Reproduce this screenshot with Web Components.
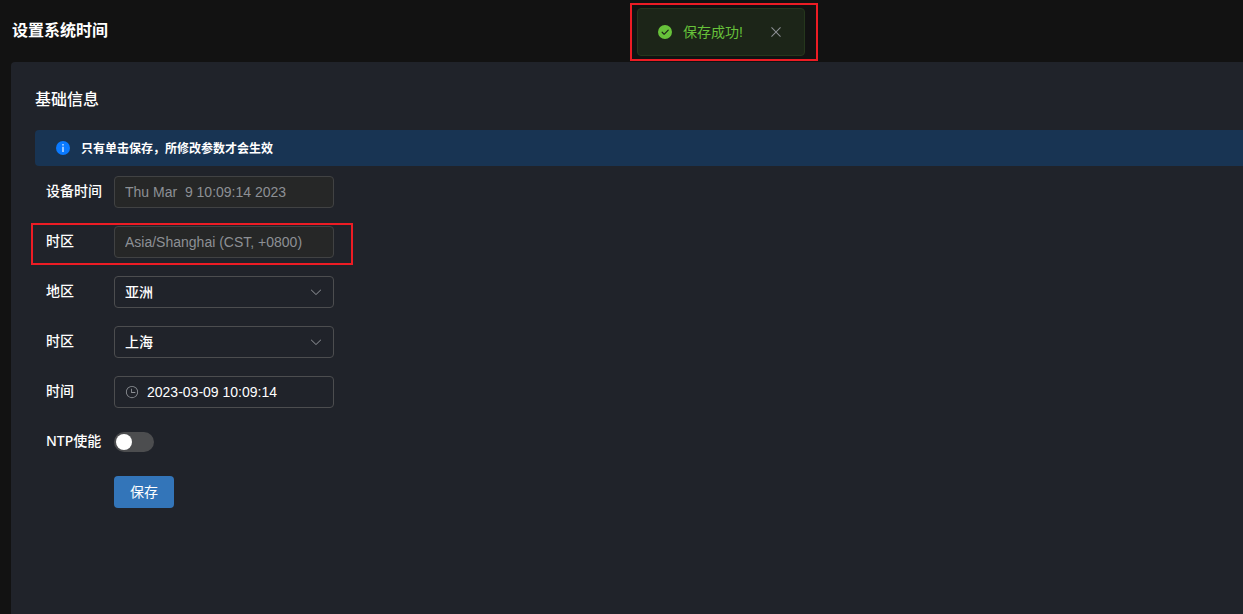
<!DOCTYPE html>
<html lang="zh-CN">
<head>
<meta charset="utf-8">
<meta name="viewport" content="width=device-width, initial-scale=1">
<title>设置系统时间</title>
<style>
  body {
    margin: 0;
    background: #121212;
    color: #fff;
    font: 14px/20px "Liberation Sans", "Noto Sans CJK SC", sans-serif;
  }
</style>
</head>
<body>
<time-settings-page heading="设置系统时间">
  <toast-message slot="toast">保存成功!</toast-message>
  <settings-card heading="基础信息">
    <info-banner>只有单击保存，所修改参数才会生效</info-banner>
    <settings-form>
      <text-field label="设备时间" value="Thu Mar  9 10:09:14 2023" disabled></text-field>
      <text-field label="时区" value="Asia/Shanghai (CST, +0800)" disabled marked></text-field>
      <select-field label="地区" options="亚洲,欧洲,非洲"></select-field>
      <select-field label="时区" options="上海,香港,东京"></select-field>
      <text-field label="时间" value="2023-03-09 10:09:14" clock></text-field>
      <switch-field label="NTP使能"></switch-field>
      <save-button>保存</save-button>
    </settings-form>
  </settings-card>
</time-settings-page>

<script>
const rowStyle = `
  :host { display: grid; grid-template-columns: 68px 220px; align-items: center; height: 32px; width: max-content; position: relative; }
  label { padding-bottom: 2px; font-weight: 500; font-family: "Noto Sans", "Noto Sans CJK SC", sans-serif; white-space: nowrap; }
  .box { display: flex; align-items: center; position: relative; box-sizing: border-box; height: 32px; border: 1px solid #4c4d4f; border-radius: 4px; }
  input, select { font: inherit; color: #fff; background: none; border: 0; outline: 0; margin: 0; padding: 0 10px; width: 100%; height: 30px; min-width: 0; box-sizing: border-box; }
`;

class Base extends HTMLElement {
  connectedCallback() {
    if (this.shadowRoot) return;
    this.attachShadow({ mode: 'open' }).innerHTML = this.render();
  }
  attr(name) { return this.getAttribute(name) || ''; }
}

customElements.define('time-settings-page', class extends Base {
  render() {
    return `<style>
      :host { display: flex; flex-direction: column; min-height: 100vh; position: relative; }
      header { display: flex; align-items: center; height: 62px; padding-left: 12px; box-sizing: border-box; }
      h1 { margin: 0; font-size: 16px; line-height: 24px; font-weight: 700; }
      main { flex: 1; display: flex; padding-left: 11px; }
      ::slotted(settings-card) { flex: 1; }
      ::slotted(toast-message) { position: absolute; top: 3px; left: 630px; }
    </style>
    <header><h1>${this.attr('heading')}</h1></header>
    <main><slot></slot></main>
    <slot name="toast"></slot>`;
  }
});

customElements.define('toast-message', class extends Base {
  render() {
    return `<style>
      :host { display: block; box-sizing: border-box; width: 188px; height: 58px; border: 2px solid #ed1c24; padding: 3px 11px 3px 5px; }
      .toast { display: flex; align-items: center; box-sizing: border-box; height: 48px; width: 168px; padding: 0 20px 0 19px; border: 1px solid #25371c; border-radius: 4px; background: #1c2518; color: #67c23a; }
      .text { margin-left: 10px; flex: 1; white-space: nowrap; }
      button { display: flex; padding: 0; border: 0; background: none; color: #8d9095; }
      svg { display: block; }
    </style>
    <div class="toast" role="status">
      <svg width="16" height="16" viewBox="0 0 1024 1024"><path fill="#67c23a" d="M512 64a448 448 0 1 1 0 896 448 448 0 0 1 0-896zm-55.808 536.384-99.52-99.584a38.4 38.4 0 1 0-54.336 54.336l126.72 126.72a38.272 38.272 0 0 0 54.336 0l262.4-262.464a38.4 38.4 0 1 0-54.272-54.336L456.192 600.384z"/></svg>
      <span class="text"><slot></slot></span>
      <button type="button" aria-label="关闭"><svg width="16" height="16" viewBox="0 0 1024 1024"><path fill="currentColor" d="M764.288 214.592 512 466.88 259.712 214.592a31.936 31.936 0 0 0-45.12 45.12L466.752 512 214.528 764.224a31.936 31.936 0 1 0 45.12 45.184L512 557.184l252.288 252.288a31.936 31.936 0 0 0 45.12-45.12L557.12 512.064l252.288-252.352a31.936 31.936 0 1 0-45.12-45.184z"/></svg></button>
    </div>`;
  }
});

customElements.define('settings-card', class extends Base {
  render() {
    return `<style>
      :host { display: block; background: #20232a; border-top-left-radius: 4px; padding: 24px 0 24px 24px; min-width: 0; }
      h2 { margin: 0 0 18px; padding-top: 2px; font-size: 16px; line-height: 24px; font-weight: 500; }
    </style>
    <h2>${this.attr('heading')}</h2><slot></slot>`;
  }
});

customElements.define('info-banner', class extends Base {
  render() {
    return `<style>
      :host { display: flex; align-items: center; gap: 10px; height: 36px; padding-left: 20px; background: #183453; border-radius: 4px 0 0 4px; font-size: 12px; font-weight: 700; }
      span { padding-top: 2px; }
    </style>
    <svg width="16" height="16" viewBox="0 0 16 16"><circle cx="8" cy="8" r="7" fill="#0a7aff"/><path fill="#cfe4ff" d="M7.3 4h1.4v1.5H7.3zM7.3 6.7h1.4V12H7.3z"/></svg>
    <span><slot></slot></span>`;
  }
});

customElements.define('settings-form', class extends Base {
  render() {
    return `<style>
      :host { display: block; }
      form { display: flex; flex-direction: column; gap: 18px; padding: 10px 0 0 11px; }
    </style>
    <form><slot></slot></form>`;
  }
});

customElements.define('text-field', class extends Base {
  render() {
    const clock = this.hasAttribute('clock')
      ? `<svg width="14" height="14" viewBox="0 0 1024 1024" fill="#8d9095"><path d="M512 896a384 384 0 1 0 0-768 384 384 0 0 0 0 768zm0 64a448 448 0 1 1 0-896 448 448 0 0 1 0 896z"/><path d="M480 256a32 32 0 0 1 32 32v256a32 32 0 0 1-64 0V288a32 32 0 0 1 32-32z"/><path d="M480 512h256q32 0 32 32t-32 32H480q-32 0-32-32t32-32z"/></svg>` : '';
    return `<style>${rowStyle}
      input:disabled { color: #8d9095; -webkit-text-fill-color: #8d9095; }
      :host([disabled]) .box { background: #262727; border-color: #414243; }
      :host([clock]) .box { padding-left: 10px; }
      :host([clock]) input { padding-left: 8px; }
      svg { flex: none; }
      :host([marked])::after { content: ""; position: absolute; inset: -3px -19px -7px -15px; border: 2px solid #ed1c24; pointer-events: none; }
    </style>
    <label for="field">${this.attr('label')}</label>
    <div class="box">${clock}<input id="field" type="text" value="${this.attr('value')}"${this.hasAttribute('disabled') ? ' disabled' : ''}></div>`;
  }
});

customElements.define('select-field', class extends Base {
  render() {
    const options = this.attr('options').split(',').map(o => `<option>${o}</option>`).join('');
    return `<style>${rowStyle}
      select { appearance: none; font-weight: 500; }
      option { background: #20232a; }
      svg { position: absolute; right: 10px; pointer-events: none; }
    </style>
    <label for="field">${this.attr('label')}</label>
    <div class="box"><select id="field">${options}</select>
      <svg width="14" height="14" viewBox="0 0 1024 1024"><path fill="#8d9095" d="M831.872 340.864 512 652.672 192.128 340.864a30.592 30.592 0 0 0-42.752 0 29.12 29.12 0 0 0 0 41.6L489.664 714.24a32 32 0 0 0 44.672 0l340.288-331.712a29.12 29.12 0 0 0 0-41.728 30.592 30.592 0 0 0-42.752 0z"/></svg>
    </div>`;
  }
});

customElements.define('switch-field', class extends Base {
  render() {
    return `<style>${rowStyle}
      input { appearance: none; display: flex; align-items: center; width: 40px; height: 20px; padding: 0 2px; border-radius: 10px; background: #4c4d4f; }
      input::before { content: ""; width: 16px; height: 16px; border-radius: 50%; background: #fff; }
      input:checked { background: #3375b9; justify-content: flex-end; }
    </style>
    <label for="field">${this.attr('label')}</label>
    <input id="field" type="checkbox" role="switch">`;
  }
});

customElements.define('save-button', class extends Base {
  render() {
    return `<style>
      :host { display: block; padding-left: 68px; }
      button { display: block; width: 60px; height: 32px; padding: 0; border: 0; border-radius: 4px; background: #3375b9; color: #fff; font: inherit; }
    </style>
    <button type="button"><slot></slot></button>`;
  }
});
</script>
</body>
</html>
